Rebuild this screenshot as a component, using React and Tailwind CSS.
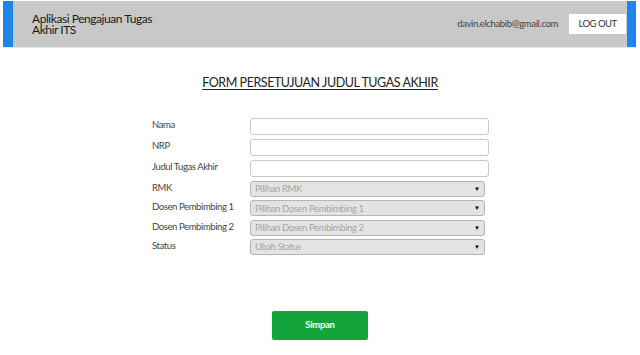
const fields = [
  { label: "Nama", type: "input" },
  { label: "NRP", type: "input" },
  { label: "Judul Tugas Akhir", type: "input" },
  { label: "RMK", type: "select", placeholder: "Pilihan RMK" },
  { label: "Dosen Pembimbing 1", type: "select", placeholder: "Pilihan Dosen Pembimbing 1" },
  { label: "Dosen Pembimbing 2", type: "select", placeholder: "Pilihan Dosen Pembimbing 2" },
  { label: "Status", type: "select", placeholder: "Ubah Status" },
];

function Field({ field }) {
  if (field.type === "input") {
    return (
      <div className="flex h-[21px] items-start">
        <label className="w-[98px] text-[9.5px] leading-[13px] tracking-[-0.4px] text-[#444]">{field.label}</label>
        <input
          type="text"
          className="h-[17px] w-[239px] rounded-[3px] border border-[#c8c8c8] bg-white outline-none"
        />
      </div>
    );
  }
  return (
    <div className="flex h-[19.3px] items-start">
      <label className="w-[98px] text-[9.5px] leading-[13px] tracking-[-0.4px] text-[#444]">{field.label}</label>
      <div className="flex h-[16px] w-[235px] items-center justify-between rounded-[3px] border border-[#b4b4b4] bg-[#e3e3e3] pl-[4px] pr-[4px]">
        <span className="text-[9.5px] leading-none tracking-[-0.4px] text-[#a6a6a6]">{field.placeholder}</span>
        <span className="text-[6px] leading-none text-black">▼</span>
      </div>
    </div>
  );
}

export default function App() {
  return (
    <div className="h-[355px] w-[640px] bg-white font-['Lato','Open_Sans',sans-serif]">
      <header className="ml-[3px] mt-[1px] flex h-[47px] w-[633px] items-center justify-between border-b border-[#e6e6e6] bg-[#c8c8c8]">
        <div className="flex h-full items-center">
          <div className="h-full w-[10px] bg-[#1e86e8]"></div>
          <p className="ml-[19px] w-[135px] text-[12px] leading-[11.5px] tracking-[-0.45px] text-[#1a1a1a]">
            Aplikasi Pengajuan Tugas Akhir ITS
          </p>
        </div>
        <div className="flex h-full items-center">
          <span className="mr-[11px] text-[9.5px] tracking-[-0.35px] text-[#444]">davin.elchabib@gmail.com</span>
          <button className="h-[20px] w-[57px] bg-white text-[9.5px] tracking-[-0.5px] text-[#333]">LOG OUT</button>
          <div className="ml-[1px] h-full w-[9px] bg-[#1e86e8]"></div>
        </div>
      </header>

      <h1 className="mt-[27px] text-center text-[12.5px] leading-[15px] tracking-[-0.45px] text-[#222] underline underline-offset-[2px]">
        FORM PERSETUJUAN JUDUL TUGAS AKHIR
      </h1>

      <form className="ml-[152px] mt-[28px] flex flex-col">
        {fields.map((f) => (
          <Field key={f.label} field={f} />
        ))}
      </form>

      <div className="ml-[272px] mt-[52px]">
        <button className="h-[29px] w-[96px] rounded-[2px] bg-[#13a53c] text-[9.5px] font-bold tracking-[-0.3px] text-white">
          Simpan
        </button>
      </div>
    </div>
  );
}
